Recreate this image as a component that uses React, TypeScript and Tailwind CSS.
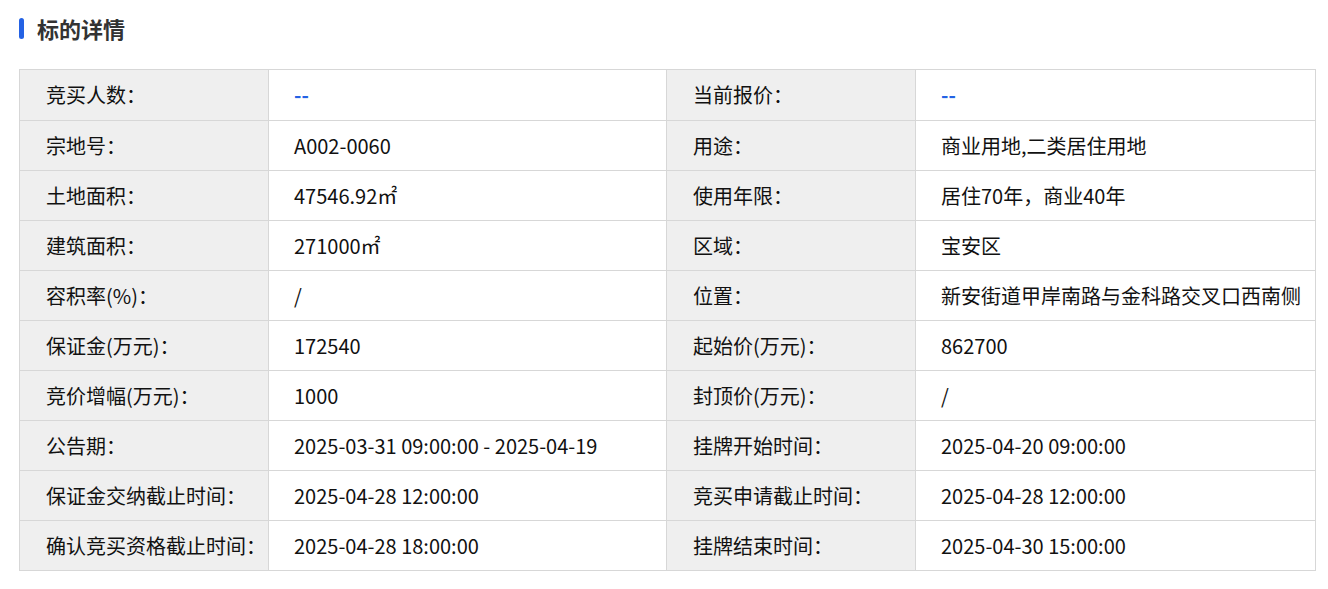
const rows: [string, string, string, string][] = [
  ["竞买人数：", "--", "当前报价：", "--"],
  ["宗地号：", "A002-0060", "用途：", "商业用地,二类居住用地"],
  ["土地面积：", "47546.92㎡", "使用年限：", "居住70年，商业40年"],
  ["建筑面积：", "271000㎡", "区域：", "宝安区"],
  ["容积率(%)：", "/", "位置：", "新安街道甲岸南路与金科路交叉口西南侧"],
  ["保证金(万元)：", "172540", "起始价(万元)：", "862700"],
  ["竞价增幅(万元)：", "1000", "封顶价(万元)：", "/"],
  ["公告期：", "2025-03-31 09:00:00 - 2025-04-19", "挂牌开始时间：", "2025-04-20 09:00:00"],
  ["保证金交纳截止时间：", "2025-04-28 12:00:00", "竞买申请截止时间：", "2025-04-28 12:00:00"],
  ["确认竞买资格截止时间：", "2025-04-28 18:00:00", "挂牌结束时间：", "2025-04-30 15:00:00"],
];

function Value({ text }: { text: string }) {
  if (text === "--") return <span className="text-[#2462e4] font-bold">--</span>;
  return <span>{text}</span>;
}

export default function App() {
  return (
    <div className="min-h-[589px] bg-white px-[19px] pt-[16px] font-['Noto_Sans_CJK_SC','Noto_Sans',sans-serif] text-[#111]">
      <div className="flex items-center h-[24px]">
        <div className="w-[5px] h-[21px] rounded-sm bg-[#2462e4]" />
        <h2 className="ml-[13px] text-[22px] font-bold text-[#333] leading-none">标的详情</h2>
      </div>

      <table className="mt-[29px] w-[1297px] border-collapse table-fixed text-[20px]">
        <colgroup>
          <col className="w-[249px]" />
          <col className="w-[398px]" />
          <col className="w-[249px]" />
          <col />
        </colgroup>
        <tbody>
          {rows.map((r, i) => (
            <tr key={r[0]} className={i === 0 ? "h-[51px]" : "h-[50px]"}>
              <td className="border border-[#d7d7d7] bg-[#efefef] pl-[26px] py-0">{r[0]}</td>
              <td className="border border-[#d7d7d7] pl-[25px] py-0">
                <Value text={r[1]} />
              </td>
              <td className="border border-[#d7d7d7] bg-[#efefef] pl-[26px] py-0">{r[2]}</td>
              <td className="border border-[#d7d7d7] pl-[25px] py-0">
                <Value text={r[3]} />
              </td>
            </tr>
          ))}
        </tbody>
      </table>
    </div>
  );
}
